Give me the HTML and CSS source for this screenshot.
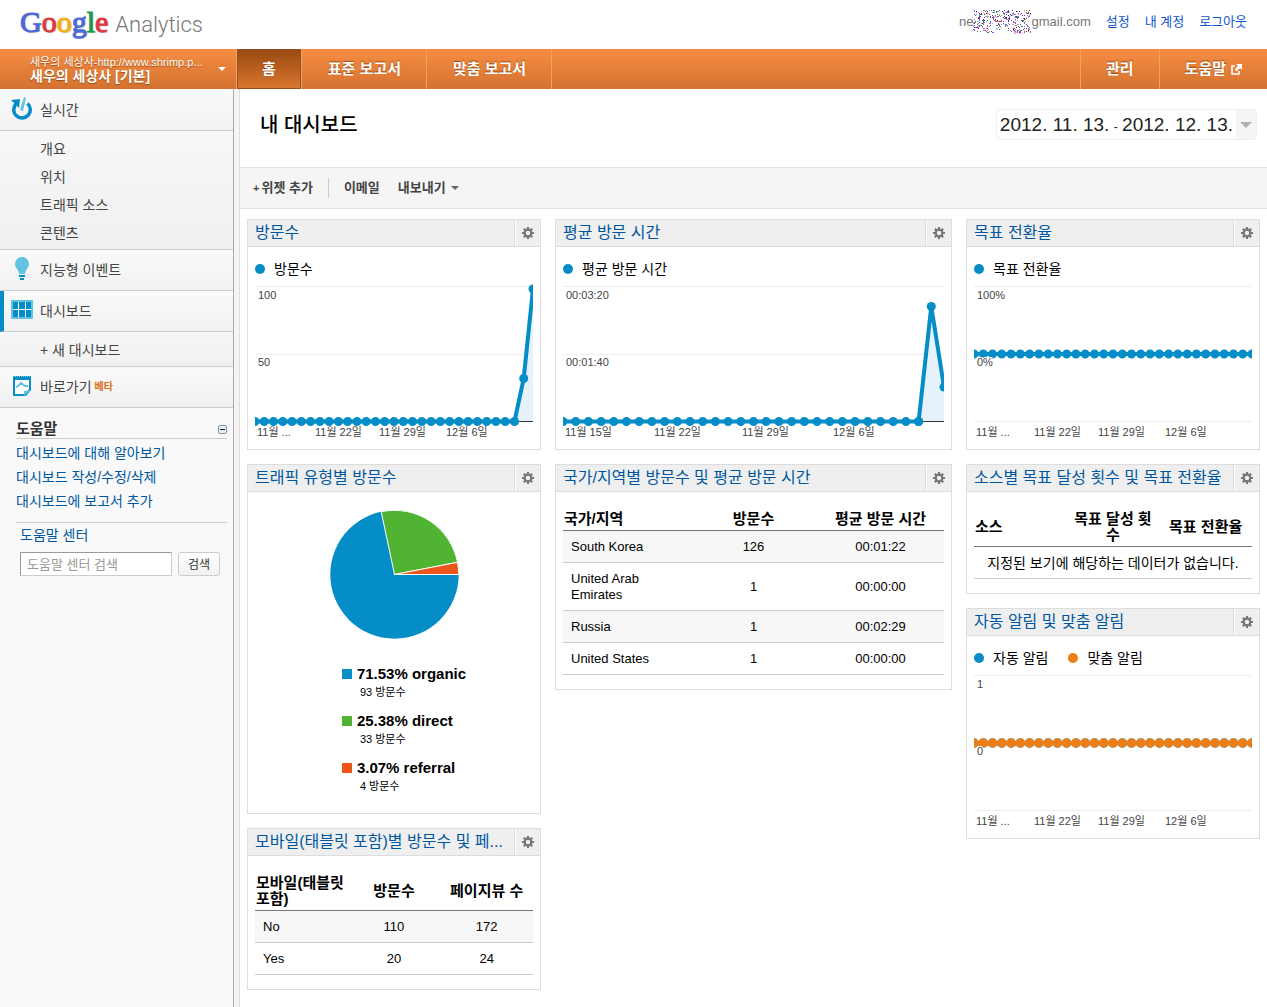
FILE: index.html
```html
<!DOCTYPE html>
<html lang="ko">
<head>
<meta charset="utf-8">
<title>내 대시보드 - Google Analytics</title>
<link rel="stylesheet" href="styles.css">
</head>
<body>
<svg class="defs" width="0" height="0" aria-hidden="true">
  <symbol id="gear" viewBox="0 0 14 14">
    <circle cx="7" cy="7" r="3.3" fill="none" stroke="#777" stroke-width="2.2"/>
    <path d="M7 1v2.4M7 10.6V13M1 7h2.4M10.6 7H13M2.8 2.8l1.6 1.6M9.6 9.6l1.6 1.6M11.2 2.8L9.6 4.4M4.4 9.6l-1.6 1.6" stroke="#777" stroke-width="2.2"/>
  </symbol>
</svg>
<div class="page">
  <header class="top">
    <a class="logo" href="#"><span class="google"><span class="b">G</span><span class="r">o</span><span class="y">o</span><span class="b">g</span><span class="g">l</span><span class="r">e</span></span><span class="product">Analytics</span></a>
    <div class="user">
      <span class="email">ne<svg class="masked" width="60" height="26" viewBox="0 0 60 26" aria-hidden="true"><defs><filter id="noise" x="0" y="0" width="100%" height="100%" color-interpolation-filters="sRGB"><feTurbulence type="turbulence" baseFrequency="0.9" numOctaves="2" seed="4"/><feComponentTransfer result="n"><feFuncR type="linear" slope="2"/><feFuncG type="linear" slope="1.6"/><feFuncB type="linear" slope="2.4"/><feFuncA type="discrete" tableValues="0 0 1 0 0 1 1 0"/></feComponentTransfer><feComposite in="n" in2="SourceGraphic" operator="in"/></filter></defs><path filter="url(#noise)" d="M2 1h58l-3 12 3 11-22 1-3-6-13 5H1l-1-12z"/></svg>gmail.com</span>
      <a href="#">설정</a><a href="#">내 계정</a><a href="#">로그아웃</a>
    </div>
  </header>

  <nav class="bar">
    <button class="account" type="button">
      <span class="account-text"><span class="property">새우의 세상사-http://www.shrimp.p...</span><strong>새우의 세상사 [기본]</strong></span>
      <span class="caret"></span>
    </button>
    <a class="tab active" href="#">홈</a>
    <a class="tab" href="#">표준 보고서</a>
    <a class="tab last" href="#">맞춤 보고서</a>
    <span class="spacer"></span>
    <a class="tab right" href="#">관리</a>
    <a class="tab right help" href="#">도움말 <svg width="11" height="11" viewBox="0 0 11 11" aria-hidden="true"><path d="M4 2H1v8h7V7" fill="none" stroke="#fff" stroke-width="1.6"/><path d="M5 0h6v6L9 4 5.500 7.500 3.500 5.500 7 2z" fill="#fff"/></svg></a>
  </nav>

  <div class="layout">
    <aside class="side">
      <a class="item" href="#"><svg width="24" height="26" viewBox="0 0 24 26" aria-hidden="true"><path d="M17.500 7.500A8.300 8.300 0 1 1 6 8" fill="none" stroke="#058dc7" stroke-width="3.500"/><path d="M1 4l9-1-1 9z" fill="#058dc7"/><path d="M14 1l2 1-3 13-3-1z" fill="#62c2e1"/></svg>실시간</a>
      <div class="sub">
        <a href="#">개요</a><a href="#">위치</a><a href="#">트래픽 소스</a><a href="#">콘텐츠</a>
      </div>
      <a class="item" href="#"><svg width="24" height="26" viewBox="0 0 24 26" aria-hidden="true"><path d="M12 1a7 7 0 0 1 7 7c0 4-4 6-4 10H9c0-4-4-6-4-10a7 7 0 0 1 7-7z" fill="#62c2e1"/><path d="M9 19h6v2H9zM10 22h4v2h-4z" fill="#058dc7"/></svg>지능형 이벤트</a>
      <a class="item current" href="#"><svg width="24" height="26" viewBox="0 0 24 26" aria-hidden="true"><rect x="1" y="3" width="22" height="19" rx="1" fill="#62c2e1"/><path d="M3 5h18v15H3z" fill="#058dc7"/><path d="M8.500 5v15M15.500 5v15M3 12.500h18" stroke="#fff"/></svg>대시보드</a>
      <div class="sub new"><a href="#">+ 새 대시보드</a></div>
      <a class="item" href="#"><svg width="24" height="26" viewBox="0 0 24 26" aria-hidden="true"><path d="M3 3h18v14l-5 6H3z" fill="#058dc7"/><path d="M5 7h14v9l-4 5H5z" fill="#fff"/><path d="M3 3h18" stroke="#f7f7f7" stroke-dasharray="1 1"/><path d="M6 14l2-1 3-3 4 3h3" fill="none" stroke="#62c2e1" stroke-width="2"/><path d="M14 23v-5l7-1z" fill="#62c2e1"/></svg>바로가기<span class="beta">베타</span></a>
      <section class="helpbox">
        <h2>도움말<button class="fold" type="button" aria-label="접기"></button></h2>
        <div class="links">
          <a href="#">대시보드에 대해 알아보기</a>
          <a href="#">대시보드 작성/수정/삭제</a>
          <a href="#">대시보드에 보고서 추가</a>
        </div>
        <div class="center">
          <a href="#">도움말 센터</a>
          <form class="search"><input type="text" placeholder="도움말 센터 검색" aria-label="도움말 센터 검색"><button type="button">검색</button></form>
        </div>
      </section>
    </aside>

    <main class="main">
      <div class="heading">
        <h1>내 대시보드</h1>
        <button class="dates" type="button"><span class="range">2012. 11. 13.<small> - </small>2012. 12. 13.</span><span class="drop"><span class="caret"></span></span></button>
      </div>
      <div class="tools">
        <button class="add" type="button"><span class="plus">+</span>위젯 추가</button>
        <button type="button">이메일</button>
        <button type="button">내보내기<span class="caret"></span></button>
      </div>

      <div class="board">
        <div class="column">
          <section class="widget">
            <header><h3><a href="#">방문수</a></h3><button type="button" aria-label="설정"><svg width="14" height="14"><use href="#gear"/></svg></button></header>
            <div class="legend"><span class="blue">방문수</span></div>
            <svg class="chart" viewBox="0 0 278 160" role="img" aria-label="방문수">
              <path class="grid" d="M0 5.500h278M0 73.500h278"/><path class="axis" d="M0 140.500h278"/>
              <path class="area" d="M259.500 140L268.700 97.500 278 8V140z"/>
              <path class="line" d="M0 140.500H259.500L268.700 97.500 278 8"/>
              <path class="dots" pathLength="28" d="M0 140.500H259.500"/><circle cx="259.500" cy="140.500" r="4.500"/><circle cx="268.700" cy="97.500" r="4.500"/><circle cx="278" cy="8" r="4.500"/>
              <text x="3" y="18">100</text><text x="3" y="85">50</text>
              <text x="2" y="155">11월 ...</text><text x="60" y="155">11월 22일</text><text x="124" y="155">11월 29일</text><text x="191" y="155">12월 6일</text>
            </svg>
          </section>

          <section class="widget">
            <header><h3><a href="#">트래픽 유형별 방문수</a></h3><button type="button" aria-label="설정"><svg width="14" height="14"><use href="#gear"/></svg></button></header>
            <svg class="pie" width="130" height="130" viewBox="0 0 130 130" role="img" aria-label="트래픽 유형별 방문수">
              <circle cx="65.500" cy="64.500" r="64.200" fill="#058dc7"/>
              <path d="M65.500 64.500L52.200 1.700A64.200 64.200 0 0 1 128.500 52.300z" fill="#50b432" stroke="#fff"/>
              <path d="M65.500 64.500L128.500 52.300A64.200 64.200 0 0 1 129.700 64.500z" fill="#ed561b" stroke="#fff"/>
            </svg>
            <dl class="shares">
              <div class="blue"><dt>71.53% organic</dt><dd>93 방문수</dd></div>
              <div class="green"><dt>25.38% direct</dt><dd>33 방문수</dd></div>
              <div class="red"><dt>3.07% referral</dt><dd>4 방문수</dd></div>
            </dl>
          </section>

          <section class="widget">
            <header><h3><a href="#">모바일(태블릿 포함)별 방문수 및 페...</a></h3><button type="button" aria-label="설정"><svg width="14" height="14"><use href="#gear"/></svg></button></header>
            <table>
              <thead><tr><th>모바일(태블릿 포함)</th><th>방문수</th><th>페이지뷰 수</th></tr></thead>
              <tbody><tr><td>No</td><td>110</td><td>172</td></tr><tr><td>Yes</td><td>20</td><td>24</td></tr></tbody>
            </table>
          </section>
        </div>

        <div class="column">
          <section class="widget">
            <header><h3><a href="#">평균 방문 시간</a></h3><button type="button" aria-label="설정"><svg width="14" height="14"><use href="#gear"/></svg></button></header>
            <div class="legend"><span class="blue">평균 방문 시간</span></div>
            <svg class="chart" viewBox="0 0 381 160" role="img" aria-label="평균 방문 시간">
              <path class="grid" d="M0 5.500h381M0 73.500h381"/><path class="axis" d="M0 140.500h381"/>
              <path class="area" d="M355.600 140L368.300 25.500 381 106V140z"/>
              <path class="line" d="M0 140.500H355.600L368.300 25.500 381 106"/>
              <path class="dots" pathLength="28" d="M0 140.500H355.600"/><circle cx="355.600" cy="140.500" r="4.500"/><circle cx="368.300" cy="25.500" r="4.500"/><circle cx="381" cy="106" r="4.500"/>
              <text x="3" y="18">00:03:20</text><text x="3" y="85">00:01:40</text>
              <text x="2" y="155">11월 15일</text><text x="91" y="155">11월 22일</text><text x="179" y="155">11월 29일</text><text x="270" y="155">12월 6일</text>
            </svg>
          </section>

          <section class="widget">
            <header><h3><a href="#">국가/지역별 방문수 및 평균 방문 시간</a></h3><button type="button" aria-label="설정"><svg width="14" height="14"><use href="#gear"/></svg></button></header>
            <table>
              <thead><tr><th>국가/지역</th><th>방문수</th><th>평균 방문 시간</th></tr></thead>
              <tbody>
                <tr><td>South Korea</td><td>126</td><td>00:01:22</td></tr>
                <tr><td>United Arab Emirates</td><td>1</td><td>00:00:00</td></tr>
                <tr><td>Russia</td><td>1</td><td>00:02:29</td></tr>
                <tr><td>United States</td><td>1</td><td>00:00:00</td></tr>
              </tbody>
            </table>
          </section>
        </div>

        <div class="column">
          <section class="widget">
            <header><h3><a href="#">목표 전환율</a></h3><button type="button" aria-label="설정"><svg width="14" height="14"><use href="#gear"/></svg></button></header>
            <div class="legend"><span class="blue">목표 전환율</span></div>
            <svg class="chart" viewBox="0 0 278 160" role="img" aria-label="목표 전환율">
              <path class="grid" d="M0 5.500h278M0 140.500h278"/>
              <path class="line" d="M0 73H278"/><path class="dots" pathLength="30" d="M0 73H278"/>
              <text x="3" y="18">100%</text><text class="halo" x="3" y="85">0%</text>
              <text x="2" y="155">11월 ...</text><text x="60" y="155">11월 22일</text><text x="124" y="155">11월 29일</text><text x="191" y="155">12월 6일</text>
            </svg>
          </section>

          <section class="widget">
            <header><h3><a href="#">소스별 목표 달성 횟수 및 목표 전환율</a></h3><button type="button" aria-label="설정"><svg width="14" height="14"><use href="#gear"/></svg></button></header>
            <table>
              <thead><tr><th>소스</th><th>목표 달성 횟수</th><th>목표 전환율</th></tr></thead>
              <tbody><tr><td class="empty" colspan="3">지정된 보기에 해당하는 데이터가 없습니다.</td></tr></tbody>
            </table>
          </section>

          <section class="widget">
            <header><h3><a href="#">자동 알림 및 맞춤 알림</a></h3><button type="button" aria-label="설정"><svg width="14" height="14"><use href="#gear"/></svg></button></header>
            <div class="legend"><span class="blue">자동 알림</span><span class="orange">맞춤 알림</span></div>
            <svg class="chart alerts" viewBox="0 0 278 160" role="img" aria-label="자동 알림 및 맞춤 알림">
              <path class="grid" d="M0 5.500h278M0 140.500h278"/>
              <path class="dots under" pathLength="30" d="M0 73H278"/>
              <path class="line" d="M0 73H278"/><path class="dots" pathLength="30" d="M0 73H278"/>
              <text x="3" y="18">1</text><text class="halo" x="3" y="85">0</text>
              <text x="2" y="155">11월 ...</text><text x="60" y="155">11월 22일</text><text x="124" y="155">11월 29일</text><text x="191" y="155">12월 6일</text>
            </svg>
          </section>
        </div>
      </div>
    </main>
  </div>
</div>
</body>
</html>
```

FILE: styles.css
```css
* { box-sizing: border-box; }
body, h1, h2, h3, dl, dd { margin: 0; }
body {
  background: #fff;
  color: #000;
  font: 14px/20px "Liberation Sans", "Noto Sans CJK KR", sans-serif;
}
a { color: #0057a0; text-decoration: none; }
button {
  margin: 0;
  padding: 0;
  border: 0;
  background: none;
  color: inherit;
  font: inherit;
  cursor: pointer;
}
.defs { display: block; }
.page { display: flex; flex-direction: column; min-height: 100vh; }
.spacer { flex: 1; }
.caret {
  border: 4px solid transparent;
  border-top-color: currentColor;
  border-bottom: 0;
}

/* Logo and user links */
.top {
  display: flex;
  align-items: center;
  justify-content: space-between;
  height: 49px;
  padding: 0 20px;
}
.logo {
  display: flex;
  align-items: baseline;
  gap: 7px;
  padding-bottom: 3px;
  line-height: 36px;
}
.google {
  font-family: "Liberation Serif", serif;
  font-size: 30px;
  text-shadow: 1px 1px 1px #bbb;
  -webkit-text-stroke: 1px;
}
.google .b { color: #4a6ad8; }
.google .r { color: #dc3a42; }
.google .y { color: #eeb211; }
.google .g { color: #179a45; }
.product { color: #777; font-family: Roboto, sans-serif; font-size: 22px; font-weight: 300; }
.user {
  display: flex;
  align-items: center;
  gap: 15px;
  padding-bottom: 6px;
  font-size: 13px;
}
.user a { color: #15c; }
.email { display: flex; align-items: center; color: #777; }
.masked { margin: 0 -1px; }

/* Orange navigation bar */
.bar {
  display: flex;
  height: 40px;
  background: linear-gradient(#f78d42, #d37230);
  color: #fff;
}
.account {
  display: flex;
  flex: none;
  align-items: center;
  justify-content: space-between;
  width: 237px;
  padding: 0 10px 0 30px;
  border-right: 1px solid #f7a165;
  text-align: left;
}
.account-text {
  display: flex;
  flex-direction: column;
  line-height: 14px;
  text-shadow: 0 1px 1px #964b14;
}
.property { font-size: 11px; }
.tab {
  display: flex;
  align-items: center;
  gap: 5px;
  padding: 0 25px 0 26px;
  border-left: 1px solid #f0a068;
  color: #fff;
  font-size: 15px;
  font-weight: bold;
  text-shadow: 0 -1px 1px #964b14;
}
.tab.active {
  padding: 0 24px;
  border: 1px solid #91501c;
  background: linear-gradient(#9a4a12, #d9762f);
}
.tab.last { border-right: 1px solid #f0a068; }
.tab.right { padding: 0 25px; }

/* Left navigation */
.layout { display: flex; flex: 1; background: #f4f4f4; }
.side {
  flex: none;
  width: 234px;
  padding-top: 1px;
  border-right: 1px solid #aaa;
  background: #f9f9f9;
}
.side a { display: block; }
.side .item {
  display: flex;
  align-items: center;
  height: 41px;
  padding-left: 10px;
  border-bottom: 1px solid #ccc;
  background: linear-gradient(#fafafa, #f1f1f1);
  color: #444;
}
.item svg { margin: 0 6px 2px 0; }
.side .current { padding-left: 6px; border-left: 4px solid #058dc7; }
.sub {
  padding: 4px 0 2px 40px;
  border-bottom: 1px solid #ccc;
  background: linear-gradient(#f7f7f7, #f0f0f0);
  line-height: 28px;
}
.sub a { color: #444; }
.beta { margin-left: 3px; color: #e06a10; font-size: 10px; font-weight: bold; }
.helpbox { padding: 12px 6px 12px 16px; }
.helpbox h2 {
  display: flex;
  align-items: center;
  justify-content: space-between;
  border-bottom: 1px solid #ccc;
  color: #333;
  font-size: 15px;
  line-height: 18px;
}
.fold {
  width: 9px;
  height: 9px;
  border: 1px solid #7c98b6;
  border-radius: 2px;
  background: linear-gradient(#222, #222) center / 5px 1px no-repeat, #eee;
}
.links { padding: 2px 0 9px; line-height: 24px; border-bottom: 1px solid #ccc; }
.center { padding-left: 4px; line-height: 24px; }
.search { display: flex; gap: 6px; padding-top: 5px; }
.search input {
  width: 152px;
  height: 24px;
  padding: 0 6px;
  border: 1px solid #ccc;
  border-color: #999 #ccc #ccc #999;
  background: #fff;
  font: 13px/20px "Liberation Sans", "Noto Sans CJK KR", sans-serif;
}
.search input::placeholder { color: #999; }
.search button {
  width: 42px;
  height: 24px;
  border: 1px solid #ccc;
  border-radius: 3px;
  background: linear-gradient(#fff, #f1f1f1);
  color: #333;
  font-size: 12px;
}

/* Report header */
.main {
  flex: 1;
  min-width: 0;
  margin-left: 5px;
  border-left: 1px solid #ddd;
  background: #fff;
}
.heading {
  display: flex;
  align-items: center;
  justify-content: space-between;
  padding: 20px 10px 27px 20px;
}
.heading h1 { font-size: 20px; font-weight: 500; }
.dates {
  display: flex;
  align-items: stretch;
  height: 31px;
  border: 1px solid #eee;
  border-radius: 4px;
  color: #222;
}
.range { padding: 0 3px; font-size: 19px; line-height: 30px; }
.range small { margin: 0 1px; font-size: 12px; }
.drop {
  display: flex;
  align-items: center;
  padding: 0 4px;
  background: #f5f5f5;
  color: #b0b0b0;
}
.drop .caret { border-width: 6px 6px 0; }
.tools {
  display: flex;
  align-items: center;
  gap: 18px;
  height: 42px;
  padding: 0 13px;
  border: 1px solid #e2e2e2;
  border-width: 1px 0;
  background: #f5f5f5;
  color: #444;
}
.tools button { font-size: 13px; font-weight: bold; }
.tools .add { padding-right: 15px; border-right: 1px solid #ccc; margin-right: -3px; }
.plus { margin-right: 2px; font-size: 11px; }
.tools .caret { display: inline-block; margin: 0 0 2px 5px; color: #666; }

/* Widgets */
.board {
  display: grid;
  grid-template-columns: 294fr 397fr 294fr;
  align-items: start;
  gap: 14px;
  padding: 10px 7px 16px;
}
.column { display: grid; grid-template-columns: minmax(0, 1fr); gap: 14px; }
.widget { border: 1px solid #ddd; }
.widget header {
  display: flex;
  height: 27px;
  border-bottom: 1px solid #ddd;
  background: #efefef;
}
.widget h3 {
  flex: 1;
  min-width: 0;
  padding: 0 0 0 7px;
  font-size: 16px;
  font-weight: normal;
  line-height: 26px;
  white-space: nowrap;
}
.widget header button {
  display: flex;
  align-items: center;
  justify-content: center;
  width: 26px;
  border-left: 1px solid #ddd;
  box-shadow: inset 1px 0 #fff;
}
.legend { display: flex; gap: 20px; padding: 12px 7px 2px; }
.legend span { display: flex; align-items: center; gap: 9px; }
.legend span::before {
  width: 10px;
  height: 10px;
  border-radius: 50%;
  content: "";
}
.legend .blue::before { background: #058dc7; }
.legend .orange::before { background: #ed7e17; }

.chart { display: block; width: calc(100% - 14px); margin: 0 7px 8px; }
.chart text { fill: #444; font-size: 11px; }
.chart .halo { stroke: #fff; stroke-width: 2px; paint-order: stroke; }
.chart circle { fill: #058dc7; }
.grid { stroke: #eee; }
.axis { stroke: #333; }
.area { fill: #e6f2fa; }
.line { fill: none; stroke: #058dc7; stroke-width: 4px; stroke-linejoin: round; }
.dots { fill: none; stroke: #058dc7; stroke-width: 9px; stroke-linecap: round; stroke-dasharray: 0 1; }
.alerts .line, .alerts .dots { stroke: #ed7e17; }
.alerts .under { stroke: #8fa08a; stroke-width: 10px; }

.pie { display: block; margin: 18px auto 25px; }
.shares {
  display: grid;
  gap: 11px;
  width: fit-content;
  margin: 0 auto 18px;
  padding-left: 20px;
  line-height: 18px;
}
.shares dt { display: flex; align-items: center; gap: 5px; font-size: 15px; font-weight: bold; }
.shares dt::before { width: 10px; height: 10px; content: ""; }
.shares .blue dt::before { background: #058dc7; }
.shares .green dt::before { background: #50b432; }
.shares .red dt::before { background: #ed561b; }
.shares dd { padding-left: 18px; font-size: 11px; }

table {
  width: calc(100% - 14px);
  margin: 19px 7px 14px;
  border-spacing: 0;
  table-layout: fixed;
  line-height: 16px;
}
th { padding: 0 5px 3px; border-bottom: 1px solid #777; font-size: 15px; }
th:first-child { padding: 0 0 3px 1px; text-align: left; }
td {
  padding: 8px 8px 7px;
  border-bottom: 1px solid #ccc;
  font-size: 13px;
  text-align: center;
}
td:first-child { text-align: left; }
tbody tr:nth-child(odd) td { background: #f7f7f7; }
tbody tr td.empty { padding: 8px 0 7px; background: #fff; font-size: 14px; text-align: center; }
```
